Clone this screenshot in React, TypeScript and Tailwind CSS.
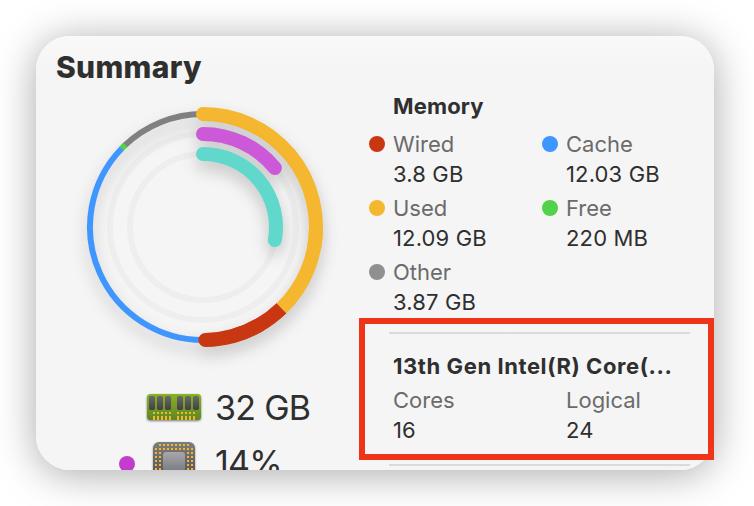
import React from "react";

const CENTER = 120;

function arc(radius: number, from: number, to: number) {
  const point = (deg: number) => {
    const a = ((deg - 90) * Math.PI) / 180;
    return `${CENTER + radius * Math.cos(a)} ${CENTER + radius * Math.sin(a)}`;
  };
  const large = to - from > 180 ? 1 : 0;
  return `M${point(from)} A${radius} ${radius} 0 ${large} 1 ${point(to)}`;
}

function UsageRings() {
  return (
    <svg width="240" height="240" viewBox="0 0 240 240" fill="none" className="overflow-visible">
      <circle cx="120" cy="120" r="93" stroke="#eeeeee" strokeWidth="6" />
      <circle cx="120" cy="120" r="73" stroke="#eeeeee" strokeWidth="6" />
      <g className="drop-shadow-[0_8px_8px_rgba(0,0,0,0.2)]">
        <path d={arc(113, 316, 360)} stroke="#808080" strokeWidth="6" />
        <path d={arc(113, 178, 314.2)} stroke="#4096ff" strokeWidth="6" />
        <path d={arc(113, 314, 316.6)} stroke="#50d24a" strokeWidth="6" />
        <path d={arc(113, 150, 178.8)} stroke="#c93712" strokeWidth="14" strokeLinecap="round" />
        <path d={arc(113, 135.9, 165)} stroke="#c93712" strokeWidth="14" />
        <path d={arc(113, 0, 100)} stroke="#f4b72f" strokeWidth="14" strokeLinecap="round" />
        <path d={arc(113, 90, 136)} stroke="#f4b72f" strokeWidth="14" />
      </g>
      <g className="drop-shadow-[0_8px_8px_rgba(0,0,0,0.2)]">
        <path d={arc(93, 0, 50.6)} stroke="#cc5ad8" strokeWidth="14" strokeLinecap="round" />
        <path d={arc(73, 0, 100.3)} stroke="#61d8cc" strokeWidth="14" strokeLinecap="round" />
      </g>
    </svg>
  );
}

function MemoryIcon() {
  const chips = [2, 10, 18, 30, 38, 46];
  const pins = [6, 10, 14, 18, 22, 30, 34, 38, 42, 46];
  return (
    <svg width="54" height="26" viewBox="0 0 54 26" className="overflow-visible drop-shadow-[0_1px_1px_rgba(0,0,0,0.5)]">
      <defs>
        <linearGradient id="board" x1="0" y1="0" x2="0" y2="1">
          <stop offset="0" stopColor="#86b51d" />
          <stop offset="1" stopColor="#5f8526" />
        </linearGradient>
        <linearGradient id="chip" x1="0" y1="0" x2="0" y2="1">
          <stop offset="0" stopColor="#696969" />
          <stop offset="1" stopColor="#414141" />
        </linearGradient>
      </defs>
      <rect width="54" height="26" rx="3.5" fill="url(#board)" />
      {chips.map((x) => (
        <rect key={x} x={x} y="2" width="6" height="14" rx="1.8" fill="url(#chip)" />
      ))}
      {pins.map((x) => (
        <g key={x} fill="#f3b52d">
          <rect x={x} y="18" width="2" height="2" />
          <rect x={x} y="22" width="2" height="4" />
        </g>
      ))}
    </svg>
  );
}

function ProcessorIcon() {
  const steps = [0, 1, 2, 3, 4, 5, 6, 7, 8, 9];
  const pins = steps.flatMap((row) =>
    steps
      .filter((col) => {
        const edgeRow = row < 2 || row > 7;
        const edgeCol = col < 2 || col > 7;
        const corner = (row === 0 || row === 9) && (col === 0 || col === 9);
        return (edgeRow || edgeCol) && !corner;
      })
      .map((col) => ({ x: 2 + col * 4, y: 2 + row * 4 })),
  );
  return (
    <svg width="42" height="42" viewBox="0 0 42 42" className="overflow-visible drop-shadow-[0_1px_1px_rgba(0,0,0,0.4)]">
      <defs>
        <linearGradient id="package" x1="0" y1="0" x2="0" y2="1">
          <stop offset="0" stopColor="#7d7d7d" />
          <stop offset="1" stopColor="#494b51" />
        </linearGradient>
        <linearGradient id="die" x1="0" y1="0" x2="0" y2="1">
          <stop offset="0" stopColor="#a8a8a8" />
          <stop offset="1" stopColor="#73757f" />
        </linearGradient>
      </defs>
      <rect width="42" height="42" rx="6" fill="url(#package)" />
      {pins.map((p) => (
        <rect key={`${p.x}-${p.y}`} x={p.x} y={p.y} width="2" height="2" fill="#f3b52d" />
      ))}
      <rect x="10" y="10" width="22" height="22" rx="3" fill="url(#die)" />
    </svg>
  );
}

type StatProps = { label: string; value: string; dot?: string };

function Stat({ label, value, dot }: StatProps) {
  return (
    <div className="flex w-[173px] gap-2 whitespace-nowrap">
      <div className="flex h-[30px] w-4 shrink-0 items-center">
        {dot && <span className={`size-4 rounded-full ${dot}`} />}
      </div>
      <div>
        <div className="text-[#6b6b6b]">{label}</div>
        <div className="tracking-[0.15px] text-[#2f2f2f]">{value}</div>
      </div>
    </div>
  );
}

export default function App() {
  return (
    <div className="relative h-[506px] w-[754px] overflow-hidden bg-white p-9 pr-10 font-['Inter',sans-serif] text-[#2f2f2f]">
      <div className="flex h-[434px] w-[678px] overflow-hidden rounded-[34px] bg-linear-to-b from-[#f9f9f9] via-[#f5f5f5] via-8% to-[#f5f5f5] shadow-[0_4px_40px_rgba(0,0,0,0.34)]">
        <div className="w-[333px] shrink-0 pl-5">
          <h1 className="mt-[13px] h-9 text-[30px] leading-9 font-extrabold tracking-[0.3px]">Summary</h1>
          <div className="mt-[22px] ml-[27px] h-[272px]">
            <UsageRings />
          </div>
          <div className="grid grid-cols-[79px_80px_1fr] auto-rows-[56px] items-center text-[34px] leading-[56px]">
            <span />
            <div className="ml-3">
              <MemoryIcon />
            </div>
            <span className="pt-[2px] whitespace-nowrap tracking-[-0.7px]">32 GB</span>
            <span className="mt-[2px] ml-[63px] size-4 rounded-full bg-[#c33ccd]" />
            <div className="ml-[18px]">
              <ProcessorIcon />
            </div>
            <span className="whitespace-nowrap tracking-[-0.8px]">14%</span>
          </div>
        </div>
        <div className="shrink-0 pt-[55px] text-[22px] leading-[30px]">
          <h2 className="ml-6 font-bold tracking-[0.15px]">Memory</h2>
          <div className="mt-2 grid grid-cols-[173px_173px] gap-y-1">
            <Stat label="Wired" value="3.8 GB" dot="bg-[#c93712]" />
            <Stat label="Cache" value="12.03 GB" dot="bg-[#4096ff]" />
            <Stat label="Used" value="12.09 GB" dot="bg-[#f4b72f]" />
            <Stat label="Free" value="220 MB" dot="bg-[#50d24a]" />
            <Stat label="Other" value="3.87 GB" dot="bg-[#909090]" />
          </div>
          <div className="mt-[15px] ml-5 h-[2px] w-[301px] bg-[#dbdbdb]" />
          <h2 className="mt-[17px] ml-6 font-bold tracking-[0.58px] whitespace-nowrap">13th Gen Intel(R) Core(...</h2>
          <div className="mt-1 flex">
            <Stat label="Cores" value="16" />
            <Stat label="Logical" value="24" />
          </div>
          <div className="mt-[19px] ml-5 h-[2px] w-[301px] bg-[#dbdbdb]" />
        </div>
      </div>
      <div className="absolute top-[318px] left-[359px] h-[142px] w-[355px] border-6 border-[#ef3517]" />
    </div>
  );
}
